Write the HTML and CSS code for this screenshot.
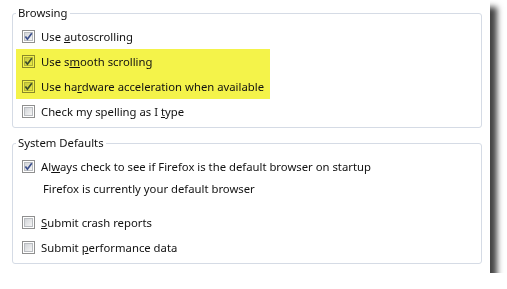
FILE: index.html
```html
<!DOCTYPE html>
<html>
<head>
    <title>Options - Advanced</title>
    <link rel="stylesheet" href="styles.css">
</head>
<body>
    <div class="window">
        <fieldset class="group">
            <legend>Browsing</legend>
            <label class="row">
                <svg class="box" width="13" height="13" viewBox="0 0 13 13"><use href="#checked"/></svg>
                <span>Use <u>a</u>utoscrolling</span>
            </label>
            <div class="highlight">
                <label class="row">
                    <svg class="box" width="13" height="13" viewBox="0 0 13 13"><use href="#checked"/></svg>
                    <span>Use s<u>m</u>ooth scrolling</span>
                </label>
                <label class="row">
                    <svg class="box" width="13" height="13" viewBox="0 0 13 13"><use href="#checked"/></svg>
                    <span>Use ha<u>r</u>dware acceleration when available</span>
                </label>
            </div>
            <label class="row">
                <svg class="box" width="13" height="13" viewBox="0 0 13 13"><use href="#empty"/></svg>
                <span>Check my spelling as I <u>t</u>ype</span>
            </label>
        </fieldset>

        <fieldset class="group">
            <legend>System Defaults</legend>
            <label class="row">
                <svg class="box" width="13" height="13" viewBox="0 0 13 13"><use href="#checked"/></svg>
                <span>Al<u>w</u>ays check to see if Firefox is the default browser on startup</span>
            </label>
            <div class="note">Firefox is currently your default browser</div>
            <label class="row">
                <svg class="box" width="13" height="13" viewBox="0 0 13 13"><use href="#empty"/></svg>
                <span><u>S</u>ubmit crash reports</span>
            </label>
            <label class="row">
                <svg class="box" width="13" height="13" viewBox="0 0 13 13"><use href="#empty"/></svg>
                <span>Submit <u>p</u>erformance data</span>
            </label>
        </fieldset>
    </div>

    <svg width="0" height="0" class="defs">
        <defs>
            <linearGradient id="fill" x1="0" y1="0" x2="1" y2="1">
                <stop offset="0" stop-color="#cfd2d6"/>
                <stop offset="1" stop-color="#f7f7f7"/>
            </linearGradient>
            <g id="empty">
                <rect x="0.5" y="0.5" width="12" height="12" fill="#fff" stroke="#8f8f8f"/>
                <rect x="2.5" y="2.5" width="8" height="8" fill="url(#fill)" stroke="#b9bcc0"/>
            </g>
            <g id="checked">
                <use href="#empty"/>
                <path d="M3.4 6.6 L5.4 9.2 L9.8 3.2" fill="none" stroke="#3c4f8c" stroke-width="1.7"/>
            </g>
        </defs>
    </svg>
</body>
</html>
```

FILE: styles.css
```css
body {
    margin: 0;
    background: #fff;
    font-family: "Noto Sans", "DejaVu Sans", sans-serif;
    font-size: 11.3px;
    color: #111;
}
.window {
    width: 490px;
    height: 273px;
    background: #fff;
    box-shadow: 7px 7px 6px #444;
    padding: 5px 0 0 12px;
    box-sizing: border-box;
}
.group {
    width: 470px;
    box-sizing: border-box;
    margin: 0 0 7px;
    padding: 3px 0 3px 9px;
    border: 1px solid #d5dbe5;
    border-radius: 3px;
}
.group legend {
    padding: 0 2px;
    margin-left: -6px;
    line-height: 16px;
}
.row {
    display: flex;
    align-items: center;
    gap: 6px;
    height: 25px;
    white-space: nowrap;
}
.box {
    flex: none;
    mix-blend-mode: multiply;
}
.highlight {
    background: #f4f34a;
    width: 254px;
    margin-left: -6px;
    padding-left: 6px;
    box-sizing: border-box;
}
.note {
    height: 19px;
    line-height: 19px;
    padding-left: 21px;
    margin-bottom: 12px;
}
.defs {
    position: absolute;
}
```
